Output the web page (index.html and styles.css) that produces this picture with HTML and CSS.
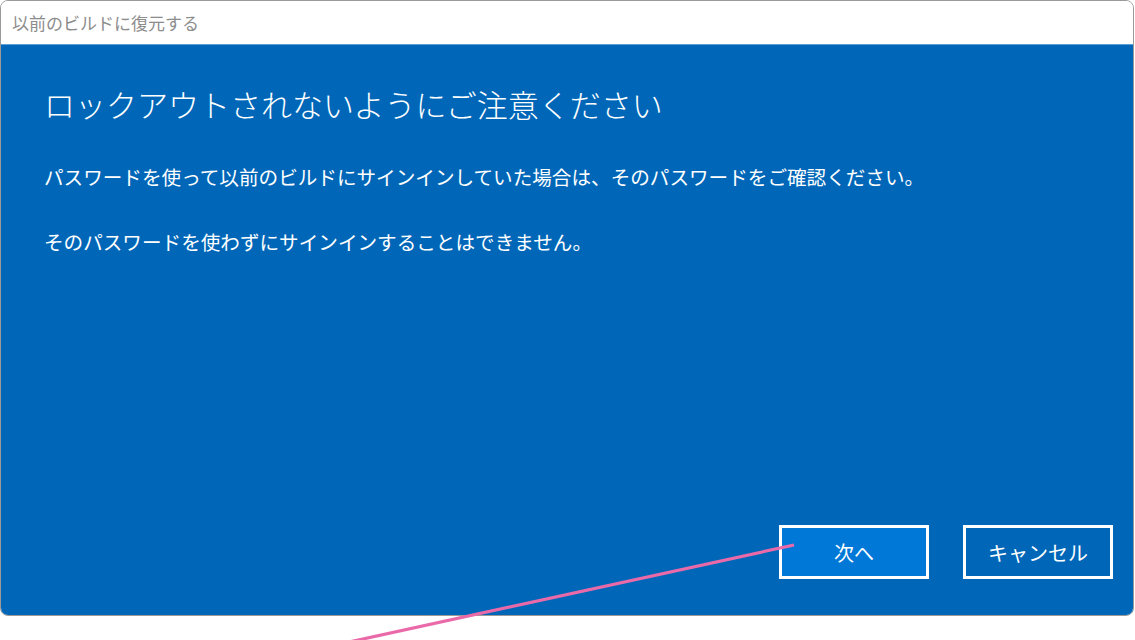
FILE: index.html
```html
<!DOCTYPE html>
<html lang="ja">
<head>
<meta charset="utf-8">
<title>以前のビルドに復元する</title>
<link rel="stylesheet" href="styles.css">
</head>
<body>
<div class="window">
  <div class="titlebar">以前のビルドに復元する</div>
  <div class="panel">
    <h1 class="heading">ロックアウトされないようにご注意ください</h1>
    <p class="text first">パスワードを使って以前のビルドにサインインしていた場合は、そのパスワードをご確認ください。</p>
    <p class="text second">そのパスワードを使わずにサインインすることはできません。</p>
    <div class="buttons">
      <button class="btn primary">次へ</button>
      <button class="btn">キャンセル</button>
    </div>
  </div>
</div>
<svg class="pointer" width="1135" height="640" viewBox="0 0 1135 640">
  <line x1="794" y1="545" x2="340" y2="644" stroke="#ea6aa9" stroke-width="3.2" stroke-linecap="butt"/>
</svg>
</body>
</html>
```
FILE: styles.css
```css
html, body {
  margin: 0;
  padding: 0;
  background: #ffffff;
  width: 1135px;
  height: 640px;
  overflow: hidden;
  font-family: "Noto Sans CJK JP", "Noto Sans", sans-serif;
}
.window {
  width: 1132px;
  height: 614px;
  border: 1px solid #9a9a9a;
  border-radius: 8px;
  overflow: hidden;
  display: flex;
  flex-direction: column;
}
.titlebar {
  height: 43px;
  flex: none;
  display: flex;
  align-items: center;
  padding-left: 11px;
  font-size: 17px;
  color: #8c8c8c;
  background: #ffffff;
}
.panel {
  flex: 1;
  background: #0067b8;
  border-top: 1px solid #5a9fd6;
  display: flex;
  flex-direction: column;
  padding: 40px 20px 36px 43px;
  color: #ffffff;
}
.heading {
  margin: 0;
  font-size: 31px;
  font-weight: 300;
  line-height: 37px;
}
.text {
  margin: 0;
  font-size: 19.6px;
  line-height: 28px;
  font-weight: 400;
}
.first { margin-top: 41px; }
.second { margin-top: 37px; }
.buttons {
  margin-top: auto;
  display: flex;
  justify-content: flex-end;
  gap: 34px;
}
.btn {
  width: 150px;
  height: 54px;
  box-sizing: border-box;
  border: 3px solid #ffffff;
  background: #0067b8;
  color: #ffffff;
  font-family: "Noto Sans CJK JP", "Noto Sans", sans-serif;
  font-size: 20px;
  padding: 0;
}
.btn.primary {
  background: #0078d7;
}
.pointer {
  position: absolute;
  left: 0;
  top: 0;
  pointer-events: none;
}
```
